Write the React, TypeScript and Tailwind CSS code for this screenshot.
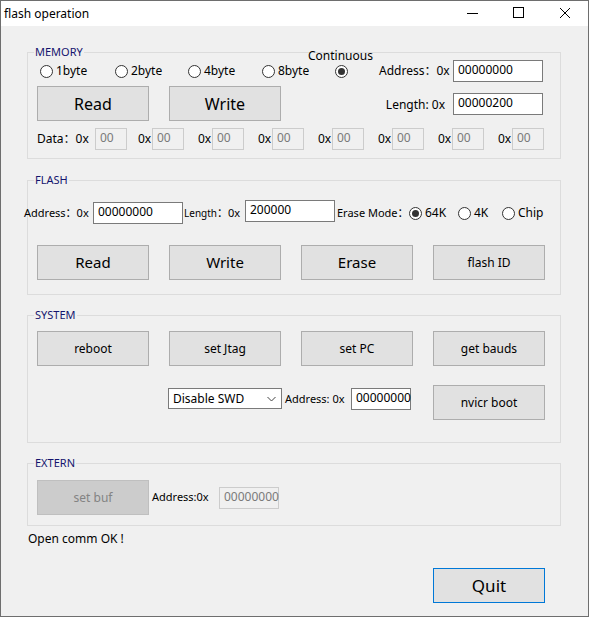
import React from 'react';

const font = { fontFamily: '"Noto Sans", "Noto Sans CJK SC", sans-serif' };

const Radio: React.FC<{ label?: string; checked?: boolean; className?: string }> = ({ label, checked, className }) => (
    <span className={`flex items-center ${className ?? ''}`}>
        <span className="w-[13px] h-[13px] rounded-full border border-[#333333] bg-white flex items-center justify-center shrink-0">
            {checked && <span className="w-[7px] h-[7px] rounded-full bg-[#333333]" />}
        </span>
        {label && <span className="ml-[3px] text-[12px] leading-none">{label}</span>}
    </span>
);

const Button: React.FC<{ label: string; size?: string; className?: string; disabled?: boolean; primary?: boolean }> = ({ label, size = 'text-[12px]', className, disabled, primary }) => (
    <div
        className={`w-[112px] h-[35px] flex items-center justify-center shrink-0 border ${size} ${
            disabled
                ? 'bg-[#cccccc] border-[#bfbfbf] text-[#838383]'
                : primary
                ? 'bg-[#e1e1e1] border-[#0078d7] text-black'
                : 'bg-[#e1e1e1] border-[#adadad] text-black'
        } ${className ?? ''}`}
    >
        {label}
    </div>
);

const Field: React.FC<{ value: string; w: string; disabled?: boolean; className?: string }> = ({ value, w, disabled, className }) => (
    <div
        className={`${w} h-[22px] shrink-0 border pl-[4px] pt-[1px] text-[12px] leading-[16px] ${
            disabled ? 'bg-[#f0f0f0] border-[#cccccc] text-[#7a7a7a]' : 'bg-white border-[#7a7a7a] text-black'
        } ${className ?? ''}`}
    >
        {value}
    </div>
);

const Group: React.FC<{ title: string; h: string; className?: string; children: React.ReactNode }> = ({ title, h, className, children }) => (
    <div className={`relative ml-[26px] w-[534px] ${h} border border-[#dcdcdc] ${className ?? ''}`}>
        <span className="absolute -top-[8px] left-[6px] px-[1px] bg-[#f0f0f0] text-[11px] leading-[14px] text-[#14146e]">{title}</span>
        {children}
    </div>
);

const App: React.FC = () => {
    const dataCells = [0, 1, 2, 3, 4, 5, 6];

    return (
        <div className="w-[589px] h-[617px] border border-[#6e6e6e] bg-[#f0f0f0] flex flex-col text-black overflow-hidden" style={font}>
            {/* Title bar */}
            <div className="h-[25px] bg-white flex items-center shrink-0">
                <span className="ml-[3px] text-[12px]">flash operation</span>
                <div className="ml-auto flex items-center h-full">
                    <svg width="46" height="25" viewBox="0 0 46 25"><line x1="17" y1="12.5" x2="28" y2="12.5" stroke="#000" strokeWidth="1" /></svg>
                    <svg width="46" height="25" viewBox="0 0 46 25"><rect x="17.5" y="6.5" width="10" height="10" fill="none" stroke="#000" strokeWidth="1" /></svg>
                    <svg width="46" height="25" viewBox="0 0 46 25"><path d="M18 7 L28 17 M28 7 L18 17" stroke="#000" strokeWidth="1" /></svg>
                </div>
            </div>

            {/* MEMORY */}
            <Group title="MEMORY" h="h-[107px]" className="mt-[26px]">
                <div className="mt-[7px] h-[22px] flex items-center pl-[12px]">
                    <Radio label="1byte" className="w-[75px]" />
                    <Radio label="2byte" className="w-[73px]" />
                    <Radio label="4byte" className="w-[74px]" />
                    <Radio label="8byte" className="w-[73px]" />
                    <span className="relative">
                        <Radio checked />
                        <span className="absolute -top-[18px] -left-[27px] text-[12px] whitespace-nowrap">Continuous</span>
                    </span>
                    <span className="ml-[31px] w-[74px] text-[12px] whitespace-nowrap">Address：0x</span>
                    <Field value="00000000" w="w-[90px]" />
                </div>
                <div className="mt-[4px] h-[35px] flex items-center pl-[9px]">
                    <Button label="Read" size="text-[16px]" />
                    <Button label="Write" size="text-[16px]" className="ml-[20px]" />
                    <span className="w-[172px] text-right pr-[8px] text-[12px] pt-[2px] whitespace-nowrap">Length: 0x</span>
                    <Field value="00000200" w="w-[90px]" />
                </div>
                <div className="mt-[7px] h-[22px] flex items-center pl-[9px]">
                    <span className="w-[58px] text-[12px] whitespace-nowrap">Data：0x</span>
                    <Field value="00" w="w-[32px]" disabled />
                    {dataCells.map(i => (
                        <span key={i} className="w-[60px] flex items-center pl-[11px]">
                            <span className="w-[14px] text-[12px]">0x</span>
                            <Field value="00" w="w-[32px]" disabled />
                        </span>
                    ))}
                </div>
            </Group>

            {/* FLASH */}
            <Group title="FLASH" h="h-[115px]" className="mt-[21px]">
                <div className="mt-[21px] h-[22px] flex items-center -ml-[4px]">
                    <span className="w-[69px] text-[11px] whitespace-nowrap">Address：0x</span>
                    <Field value="00000000" w="w-[90px]" />
                    <span className="ml-[1px] w-[61px] text-[11px] whitespace-nowrap"><span className="text-[10px]">Length</span>：0x</span>
                    <Field value="200000" w="w-[90px]" className="mb-[4px]" />
                    <span className="ml-[2px] w-[72px] text-[11px] whitespace-nowrap">Erase Mode：</span>
                    <Radio label="64K" checked className="w-[49px]" />
                    <Radio label="4K" className="w-[44px]" />
                    <Radio label="Chip" />
                </div>
                <div className="mt-[21px] flex items-center pl-[9px] gap-[20px]">
                    <Button label="Read" size="text-[15px]" />
                    <Button label="Write" size="text-[15px]" />
                    <Button label="Erase" size="text-[15px]" />
                    <Button label="flash ID" />
                </div>
            </Group>

            {/* SYSTEM */}
            <Group title="SYSTEM" h="h-[128px]" className="mt-[20px]">
                <div className="mt-[15px] flex items-center pl-[9px] gap-[20px]">
                    <Button label="reboot" />
                    <Button label="set Jtag" />
                    <Button label="set PC" />
                    <Button label="get bauds" />
                </div>
                <div className="mt-[19px] flex items-start pl-[140px]">
                    <div className="mt-[3px] w-[114px] h-[21px] bg-white border border-[#7a7a7a] flex items-center pl-[4px] text-[12px]">
                        <span>Disable SWD</span>
                        <svg className="ml-auto mr-[5px]" width="9" height="6" viewBox="0 0 9 6"><path d="M0.5 1 L4.5 5 L8.5 1" fill="none" stroke="#444" strokeWidth="1" /></svg>
                    </div>
                    <span className="mt-[6px] ml-[3px] w-[66px] text-[11px] whitespace-nowrap">Address: 0x</span>
                    <Field value="00000000" w="w-[60px]" className="mt-[3px]" />
                    <Button label="nvicr boot" className="ml-[22px]" />
                </div>
            </Group>

            {/* EXTERN */}
            <Group title="EXTERN" h="h-[63px]" className="mt-[20px]">
                <div className="mt-[16px] flex items-center pl-[9px]">
                    <Button label="set buf" disabled />
                    <span className="ml-[3px] w-[67px] text-[11px] whitespace-nowrap">Address:0x</span>
                    <Field value="00000000" w="w-[60px]" disabled />
                </div>
            </Group>

            <div className="mt-[5px] ml-[27px] text-[12px] leading-[16px]">Open comm OK !</div>

            <div className="mt-[21px] ml-[432px]">
                <Button label="Quit" size="text-[17px]" primary />
            </div>
        </div>
    );
};

export default App;
